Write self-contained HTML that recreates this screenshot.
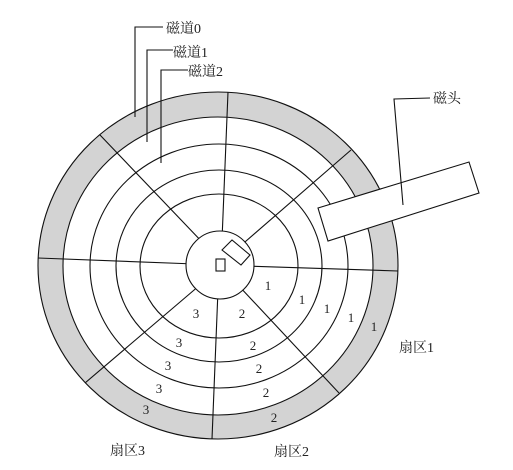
<!DOCTYPE html>
<html><head><meta charset="utf-8"><style>
html,body{margin:0;padding:0;background:#fff;}
svg{display:block}
text{font-family:"Liberation Serif","Noto Serif CJK SC",serif;font-size:14px;fill:#222}
.n{font-size:13px}
</style></head><body>
<svg width="513" height="470" viewBox="0 0 513 470" xmlns="http://www.w3.org/2000/svg">
<g stroke="#111" stroke-width="1.1">
<ellipse cx="218" cy="265.5" rx="180" ry="173.5" fill="#d3d3d3"/>
<ellipse cx="218" cy="266" rx="155" ry="149" fill="#fff"/>
<ellipse cx="219" cy="266" rx="129" ry="122" fill="none"/>
<ellipse cx="219" cy="266" rx="103" ry="96" fill="none"/>
<ellipse cx="219" cy="266" rx="79" ry="72" fill="none"/>
<line x1="228" y1="92" x2="222" y2="240"/>
<line x1="100" y1="135" x2="205" y2="245"/>
<line x1="38" y1="258" x2="195" y2="264"/>
<line x1="85" y1="383" x2="200" y2="285"/>
<line x1="212" y1="439" x2="218" y2="290"/>
<line x1="339" y1="393" x2="238" y2="285"/>
<line x1="398" y1="271" x2="245" y2="266"/>
<line x1="351" y1="150" x2="238" y2="248"/>
<circle cx="220" cy="265" r="34" fill="#fff"/>
<polygon points="222,250 232,240 250,255 241,265" fill="#fff"/>
<rect x="216" y="259" width="9" height="12" fill="#fff"/>
<polygon points="318,208 469,162 479,193 328,241" fill="#fff"/>
<polyline points="163,27 135,27 135,117" fill="none"/>
<polyline points="173,50 147,50 147,142" fill="none"/>
<polyline points="188,70 161,70 161,163" fill="none"/>
<polyline points="430,98 394,99 403,205" fill="none"/>
</g>
<text x="166" y="33">磁道0</text>
<text x="173" y="57">磁道1</text>
<text x="188" y="76">磁道2</text>
<text x="433" y="103">磁头</text>
<text x="399" y="352">扇区1</text>
<text x="110" y="455">扇区3</text>
<text x="274" y="456">扇区2</text>
<g class="n" text-anchor="middle">
<text class="n" x="268" y="290">1</text><text class="n" x="302" y="304">1</text><text class="n" x="327" y="313">1</text><text class="n" x="351" y="322">1</text><text class="n" x="374" y="331">1</text>
<text class="n" x="242" y="318">2</text><text class="n" x="253" y="350">2</text><text class="n" x="259" y="373">2</text><text class="n" x="266" y="397">2</text><text class="n" x="274" y="422">2</text>
<text class="n" x="196" y="318">3</text><text class="n" x="179" y="347">3</text><text class="n" x="168" y="370">3</text><text class="n" x="159" y="393">3</text><text class="n" x="146" y="414">3</text>
</g>
</svg>
</body></html>
